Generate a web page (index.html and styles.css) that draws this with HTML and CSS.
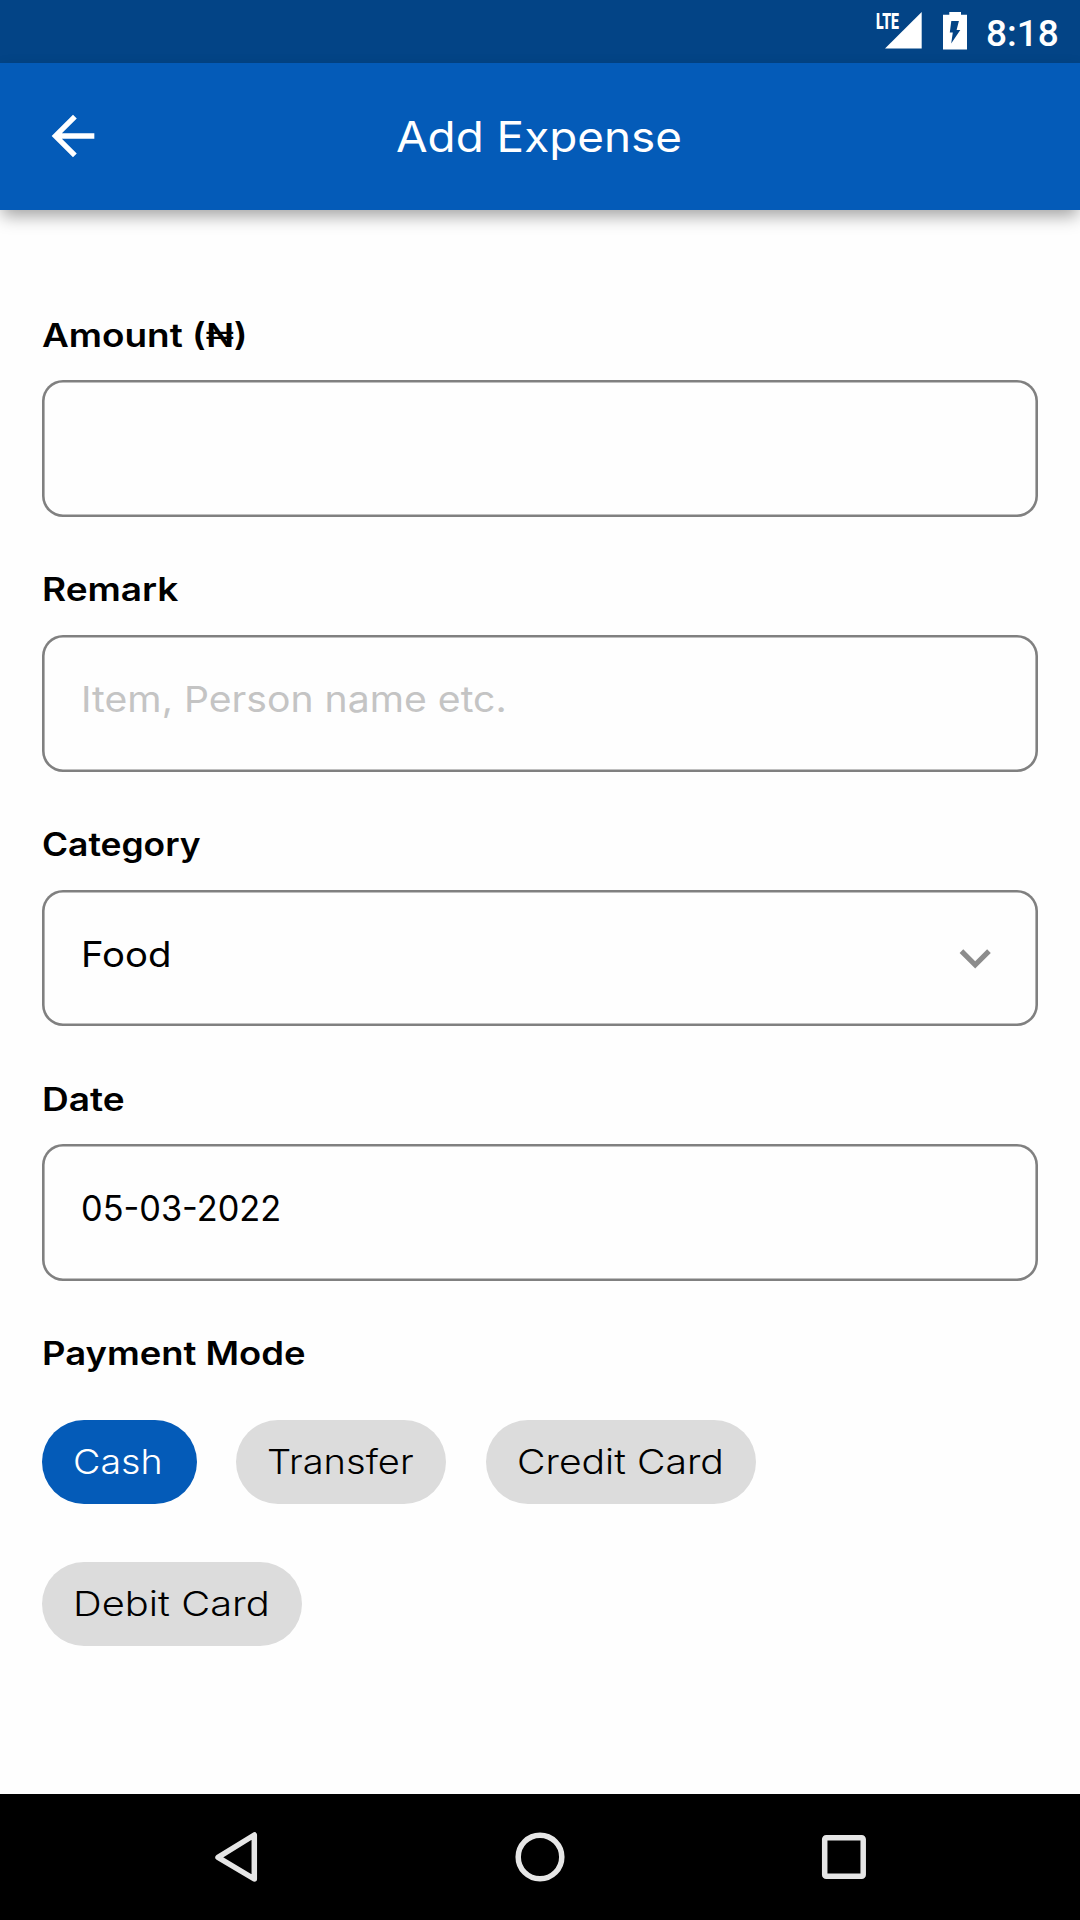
FILE: index.html
```html
<!DOCTYPE html>
<html lang="en">
<head>
<meta charset="utf-8">
<title>Add Expense</title>
<link rel="stylesheet" href="styles.css">
</head>
<body>
<div class="screen">
  <div class="status-bar">
    <div class="network">
      <span class="lte">LTE</span>
      <svg class="signal" viewBox="0 0 37 37"><path d="M0 36.5L36.7 0V36.5z"/></svg>
    </div>
    <svg class="battery" viewBox="0 0 24 38"><path fill-rule="evenodd" d="M6.3 0H18v2.7h6V37.5H0V2.7h6.3zM8.3 9L6.800 20.600h3L8.200 31.500 17.300 18h-3.700L15.900 9z"/></svg>
    <span class="time">8:18</span>
  </div>
  <header class="app-bar">
    <svg class="back" viewBox="0 0 24 24"><path d="M20 11H7.830l5.590-5.590L12 4l-8 8 8 8 1.410-1.410L7.830 13H20z"/></svg>
    <h1 class="title">Add Expense</h1>
  </header>
  <main class="form">
    <div class="group">
      <div class="label"><span class="wide amount">Amount (₦)</span></div>
      <div class="field"></div>
    </div>
    <div class="group">
      <div class="label"><span class="wide remark">Remark</span></div>
      <div class="field"><span class="wide placeholder">Item, Person name etc.</span></div>
    </div>
    <div class="group">
      <div class="label"><span class="wide category">Category</span></div>
      <div class="field"><span class="wide food">Food</span>
        <svg class="chevron" viewBox="0 0 24 24"><path d="M7.410 8.590L12 13.170l4.590-4.580L18 10l-6 6-6-6z"/></svg>
      </div>
    </div>
    <div class="group">
      <div class="label"><span class="wide date-label">Date</span></div>
      <div class="field"><span class="wide date">05-03-2022</span></div>
    </div>
    <div class="label"><span class="wide payment">Payment Mode</span></div>
    <div class="chips">
      <div class="chip cash"><span class="wide">Cash</span></div>
      <div class="chip transfer"><span class="wide">Transfer</span></div>
      <div class="chip credit"><span class="wide">Credit Card</span></div>
      <div class="chip debit"><span class="wide">Debit Card</span></div>
    </div>
  </main>
  <nav class="nav-bar">
    <svg viewBox="0 0 64 64"><path d="M14 32.300L50.300 10v44z"/></svg>
    <svg viewBox="0 0 64 64"><circle cx="32" cy="32" r="21.800"/></svg>
    <svg viewBox="0 0 64 64"><rect x="12.700" y="12.700" width="38.500" height="38.500" rx="1.500"/></svg>
  </nav>
</div>
</body>
</html>
```
FILE: styles.css
```css
* {
  box-sizing: border-box;
}

body {
  margin: 0;
  background: #fff;
  font-family: Inter, "Noto Sans", sans-serif;
  color: #000;
}

svg {
  display: block;
  flex: none;
}

.screen {
  display: flex;
  flex-direction: column;
  width: 1080px;
  height: 1920px;
  overflow: hidden;
  background: #fefefe;
}

/* Status bar */
.status-bar {
  display: flex;
  justify-content: flex-end;
  height: 63px;
  padding-right: 22px;
  background: #034486;
  color: #fff;
  fill: #fff;
}

.network {
  display: flex;
  margin-right: 21.500px;
}

.lte {
  width: 9px;
  margin-top: 9.500px;
  font: 900 22px/24px Roboto, sans-serif;
  white-space: nowrap;
  transform: scaleX(0.640);
  transform-origin: 0 50%;
}

.signal {
  width: 37px;
  height: 37px;
  margin-top: 12.300px;
}

.battery {
  width: 24px;
  height: 38px;
  margin: 12.400px 19px 0 0;
}

.time {
  width: 72px;
  font: 500 37px/67px Roboto, sans-serif;
}

/* App bar */
.app-bar {
  display: grid;
  grid-template-columns: 106px 1fr 106px;
  align-items: center;
  flex: none;
  height: 147px;
  z-index: 1;
  background: #045bb8;
  box-shadow: 0 8px 16px -2px rgba(0, 0, 0, 0.360);
}

.back {
  width: 64px;
  height: 64px;
  margin: -1px 0 0 41.300px;
  fill: #fff;
}

.title {
  margin: 0;
  font-size: 41.700px;
  font-weight: 420;
  line-height: 50px;
  text-align: center;
  color: #fff;
  transform: translateX(-1px) scaleX(1.100);
}

/* Form */
.form {
  flex: 1;
  padding: 104.800px 42px 0;
}

.group {
  height: 254.670px;
}

.label {
  height: 40px;
  font-size: 32px;
  font-weight: 560;
  line-height: 42px;
}

.wide {
  display: inline-block;
  white-space: nowrap;
  transform: scaleX(var(--stretch));
  transform-origin: 0 50%;
}

.amount { --stretch: 1.153; }
.remark { --stretch: 1.156; }
.category { --stretch: 1.106; }
.date-label { --stretch: 1.156; }
.payment { --stretch: 1.138; }

.field {
  display: flex;
  justify-content: space-between;
  height: 136.670px;
  margin-top: 25.400px;
  padding: 44px 32px 0 39px;
  border-radius: 21px;
  box-shadow: inset 0 0 0 2.600px #808080;
  font-size: 35px;
  font-weight: 400;
  line-height: 40px;
}

.placeholder {
  --stretch: 1.103;
  font-size: 35.500px;
  line-height: 42px;
  color: #c4c4c4;
}

.food { --stretch: 1.095; }
.date { --stretch: 0.980; }

.chevron {
  width: 62.400px;
  height: 62.400px;
  margin-top: -6.500px;
  fill: #8c8c8c;
}

/* Payment mode chips */
.chips {
  display: flex;
  flex-wrap: wrap;
  gap: 58px 39px;
  padding-top: 46.500px;
}

.chip {
  height: 84px;
  padding-left: 31px;
  border-radius: 42px;
  background: #dcdcdc;
  font-size: 34.500px;
  font-weight: 300;
  line-height: 84px;
}

.cash {
  --stretch: 1.090;
  width: 155px;
  background: #045bb8;
  color: #fff;
}

.transfer { --stretch: 1.103; width: 210px; }
.credit { --stretch: 1.134; width: 270px; margin-left: 1px; }
.debit { --stretch: 1.155; width: 260px; }

/* System navigation */
.nav-bar {
  display: flex;
  justify-content: center;
  align-items: center;
  gap: 240px;
  height: 126px;
  background: #000;
}

.nav-bar svg {
  width: 64px;
  height: 64px;
  fill: none;
  stroke: #e6e6e6;
  stroke-width: 5.500px;
  stroke-linejoin: round;
}
```
